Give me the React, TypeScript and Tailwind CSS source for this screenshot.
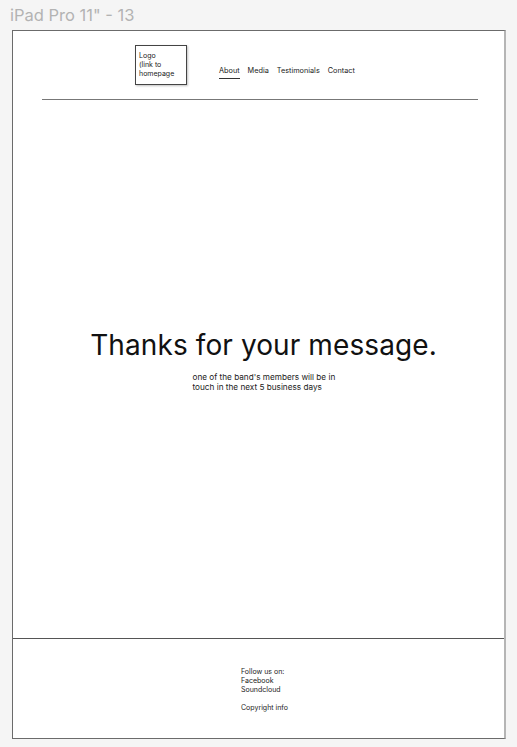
export default function App() {
  const navItems = ['About', 'Media', 'Testimonials', 'Contact'];

  return (
    <div
      className="w-[517px] h-[747px] bg-[#f5f5f5] overflow-hidden"
      style={{ fontFamily: 'Inter, "Noto Sans", sans-serif' }}
    >
      {/* frame label */}
      <div className="h-[30px] pl-[10px] pt-[5px] text-[16.5px] leading-[20px] text-[#b3b3b3]">
        iPad Pro 11" - 13
      </div>

      {/* frame */}
      <div className="ml-[12px] w-[494px] h-[709px] bg-white border-l border-t border-b border-[#6b6b6b] border-r-2 border-r-[#b5b5b5] flex flex-col">
        {/* header */}
        <header className="h-[68px] flex items-start">
          <div className="ml-[122px] mt-[14px] w-[52px] h-[40px] border border-[#444] shadow-[1px_1px_2px_rgba(0,0,0,0.25)] pl-[3px] pt-[5px] text-[7px] leading-[9px] text-[#222]">
            Logo
            <br />
            (link to
            <br />
            homepage
          </div>
          <nav className="ml-[32px] mt-[35px] flex gap-[8px] text-[7.3px] leading-[10px] text-[#222]">
            {navItems.map((item, i) => (
              <span
                key={item}
                className={i === 0 ? 'border-b border-[#333] pb-[2px]' : ''}
              >
                {item}
              </span>
            ))}
          </nav>
        </header>
        <div className="ml-[29px] mr-[26px] h-px bg-[#777]" />

        {/* main message */}
        <main className="flex-1 flex flex-col items-center pt-[228px] pl-[10px]">
          <h1 className="text-[28px] leading-[34px] text-[#111] tracking-[0.1px]">
            Thanks for your message.
          </h1>
          <p className="mt-[10px] ml-[4px] w-[146px] text-[8.2px] leading-[10px] text-[#222]">
            one of the band's members will be in
            <br />
            touch in the next 5 business days
          </p>
        </main>

        {/* footer */}
        <footer className="h-[100px] border-t border-[#555] pl-[228px] pt-[28px] text-[7px] leading-[9px] text-[#222]">
          <p>Follow us on:</p>
          <p>Facebook</p>
          <p>Soundcloud</p>
          <p className="mt-[9px]">Copyright info</p>
        </footer>
      </div>
    </div>
  );
}
